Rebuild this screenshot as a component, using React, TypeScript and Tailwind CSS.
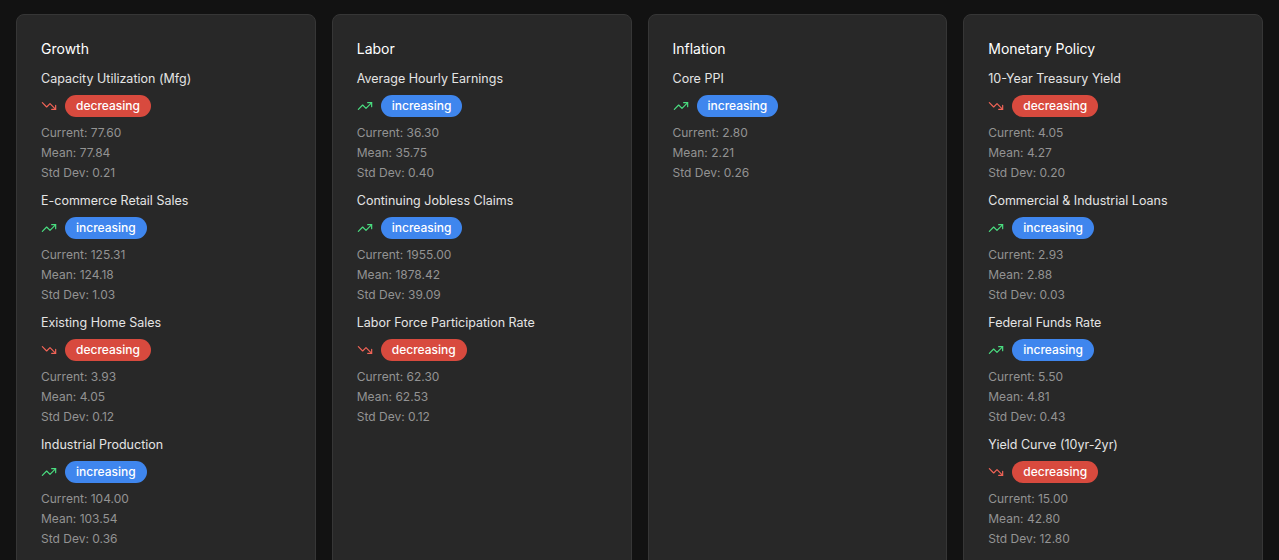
import { TrendingDown, TrendingUp } from "lucide-react";

type Metric = {
  name: string;
  trend: "increasing" | "decreasing";
  current: string;
  mean: string;
  std: string;
};

type Category = { title: string; metrics: Metric[] };

const categories: Category[] = [
  {
    title: "Growth",
    metrics: [
      { name: "Capacity Utilization (Mfg)", trend: "decreasing", current: "77.60", mean: "77.84", std: "0.21" },
      { name: "E-commerce Retail Sales", trend: "increasing", current: "125.31", mean: "124.18", std: "1.03" },
      { name: "Existing Home Sales", trend: "decreasing", current: "3.93", mean: "4.05", std: "0.12" },
      { name: "Industrial Production", trend: "increasing", current: "104.00", mean: "103.54", std: "0.36" },
    ],
  },
  {
    title: "Labor",
    metrics: [
      { name: "Average Hourly Earnings", trend: "increasing", current: "36.30", mean: "35.75", std: "0.40" },
      { name: "Continuing Jobless Claims", trend: "increasing", current: "1955.00", mean: "1878.42", std: "39.09" },
      { name: "Labor Force Participation Rate", trend: "decreasing", current: "62.30", mean: "62.53", std: "0.12" },
    ],
  },
  {
    title: "Inflation",
    metrics: [{ name: "Core PPI", trend: "increasing", current: "2.80", mean: "2.21", std: "0.26" }],
  },
  {
    title: "Monetary Policy",
    metrics: [
      { name: "10-Year Treasury Yield", trend: "decreasing", current: "4.05", mean: "4.27", std: "0.20" },
      { name: "Commercial & Industrial Loans", trend: "increasing", current: "2.93", mean: "2.88", std: "0.03" },
      { name: "Federal Funds Rate", trend: "increasing", current: "5.50", mean: "4.81", std: "0.43" },
      { name: "Yield Curve (10yr-2yr)", trend: "decreasing", current: "15.00", mean: "42.80", std: "12.80" },
    ],
  },
];

function MetricRow({ m }: { m: Metric }) {
  const up = m.trend === "increasing";
  return (
    <div className="flex flex-col">
      <div className="text-[12.5px] leading-5 text-[#e4e4e4]">{m.name}</div>
      <div className="mt-1.5 flex items-center gap-2">
        {up ? (
          <TrendingUp size={16} strokeWidth={1.75} className="text-[#4ade80]" />
        ) : (
          <TrendingDown size={16} strokeWidth={1.75} className="text-[#f26457]" />
        )}
        <span
          className={
            up
              ? "h-[22px] rounded-full bg-[#3f86ee] px-[11px] text-xs font-medium leading-[22px] text-white"
              : "h-[22px] rounded-full bg-[#d84a3e] px-[11px] text-xs font-medium leading-[22px] text-white"
          }
        >
          {m.trend}
        </span>
      </div>
      <div className="mt-1.5 flex flex-col text-xs leading-5 text-[#939393]">
        <span>Current: {m.current}</span>
        <span>Mean: {m.mean}</span>
        <span>Std Dev: {m.std}</span>
      </div>
    </div>
  );
}

export default function App() {
  return (
    <div className="min-h-screen bg-[#121212] p-4 pt-[14px] font-['Inter',sans-serif]">
      <div className="grid grid-cols-4 gap-4">
        {categories.map((c) => (
          <div key={c.title} className="min-h-[600px] rounded-lg border border-[#363636] bg-[#282828] p-6">
            <h2 className="mb-2.5 text-sm leading-5 font-normal text-white">{c.title}</h2>
            <div className="flex flex-col gap-2">
              {c.metrics.map((m) => (
                <MetricRow key={m.name} m={m} />
              ))}
            </div>
          </div>
        ))}
      </div>
    </div>
  );
}
